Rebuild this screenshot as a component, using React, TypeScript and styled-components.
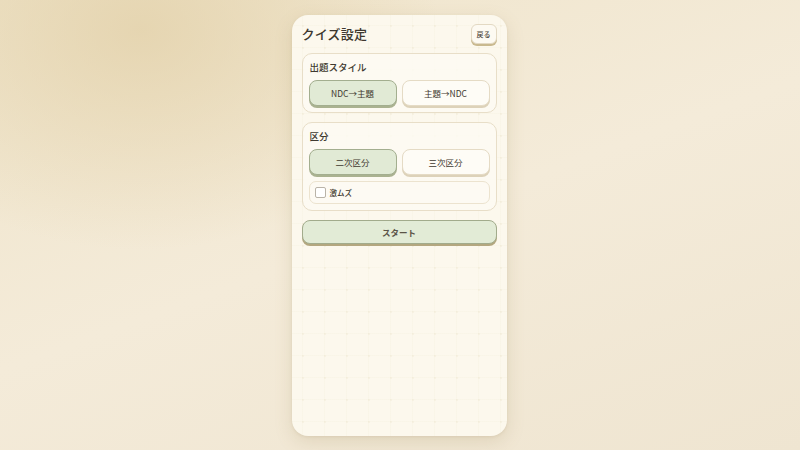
import React, { useState } from 'react';
import styled, { createGlobalStyle } from 'styled-components';

const GlobalStyle = createGlobalStyle`
  html, body {
    margin: 0;
    padding: 0;
    height: 100%;
  }
  body {
    font-family: "Noto Sans CJK JP", "Noto Sans", sans-serif;
    color: #3b352c;
  }
  #root {
    height: 100%;
  }
`;

const Page = styled.div`
  width: 100%;
  height: 100vh;
  box-sizing: border-box;
  padding: 15px 2px 14px 0;
  display: flex;
  justify-content: center;
  background:
    radial-gradient(ellipse 300px 220px at 140px 30px, rgba(226, 208, 168, 0.75), rgba(226, 208, 168, 0) 100%),
    linear-gradient(160deg, #efe4ca 0%, #f4ebd9 50%, #efe5d1 100%);
`;

const Card = styled.div`
  width: 215px;
  box-sizing: border-box;
  border-radius: 16px;
  padding: 7px 10px;
  display: flex;
  flex-direction: column;
  gap: 9px;
  background-color: #fcf8ed;
  background-image:
    radial-gradient(circle, rgba(220, 205, 170, 0.14) 0.8px, transparent 1.2px),
    linear-gradient(rgba(225, 212, 180, 0.08) 1px, transparent 1px),
    linear-gradient(90deg, rgba(225, 212, 180, 0.08) 1px, transparent 1px);
  background-size: 22px 22px;
  background-position: 0 0, 10px 10px, 10px 10px;
  box-shadow: 0 6px 18px rgba(150, 125, 80, 0.18), 0 1px 3px rgba(150, 125, 80, 0.12);
`;

const Header = styled.div`
  display: flex;
  align-items: center;
  justify-content: space-between;
  height: 22px;
`;

const Title = styled.h1`
  margin: 0;
  font-size: 13px;
  font-weight: 500;
  letter-spacing: 0.2px;
  color: #3d372e;
`;

const BackButton = styled.button`
  width: 26px;
  height: 20px;
  padding: 0;
  font-family: inherit;
  font-size: 7px;
  font-weight: 500;
  color: #4a4338;
  background: #fdfaf2;
  border: 1px solid #e3d9c3;
  border-radius: 6px;
  box-shadow: 0 2px 0 #c9b98f;
  cursor: pointer;
  margin-top: 2px;
`;

const Section = styled.div`
  border: 1px solid #e8dec8;
  border-radius: 10px;
  background: rgba(253, 250, 242, 0.85);
  padding: 7px 6px 6px;
  display: flex;
  flex-direction: column;
  gap: 6px;
`;

const SectionLabel = styled.div`
  font-size: 9.5px;
  font-weight: 500;
  color: #403a30;
  padding-left: 1px;
  line-height: 13px;
`;

const ButtonRow = styled.div`
  display: grid;
  grid-template-columns: 1fr 1fr;
  gap: 5px;
`;

const ChoiceButton = styled.button<{ $active: boolean }>`
  height: 26px;
  padding: 0;
  font-family: inherit;
  font-size: 8.5px;
  font-weight: 400;
  color: #3e382e;
  border-radius: 8px;
  cursor: pointer;
  background: ${(p) => (p.$active ? '#e1ead5' : '#fefcf6')};
  border: 1px solid ${(p) => (p.$active ? '#a3ae8f' : '#e5dbc5')};
  box-shadow: 0 2px 0 ${(p) => (p.$active ? '#aab290' : '#ddd2b9')};
`;

const CheckRow = styled.label`
  display: flex;
  align-items: center;
  gap: 4px;
  height: 21px;
  padding: 0 5px;
  border: 1px solid #ece3cf;
  border-radius: 7px;
  background: #fdfaf3;
  font-size: 7.5px;
  font-weight: 500;
  color: #3e382e;
  cursor: pointer;
`;

const Box = styled.span`
  width: 9px;
  height: 9px;
  border: 1px solid #b9b3a8;
  border-radius: 2px;
  background: #ffffff;
`;

const StartButton = styled.button`
  height: 24px;
  font-family: inherit;
  font-size: 8.5px;
  font-weight: 700;
  color: #5a5346;
  background: #e2ebd6;
  border: 1px solid #a2ab8c;
  border-radius: 8px;
  box-shadow: 0 2px 0 #b3a77f;
  cursor: pointer;
`;

const App = () => {
  const [style, setStyle] = useState<'ndc' | 'topic'>('ndc');
  const [level, setLevel] = useState<2 | 3>(2);
  const [hard, setHard] = useState(false);

  return (
    <>
      <GlobalStyle />
      <Page>
        <Card>
          <Header>
            <Title>クイズ設定</Title>
            <BackButton>戻る</BackButton>
          </Header>

          <Section>
            <SectionLabel>出題スタイル</SectionLabel>
            <ButtonRow>
              <ChoiceButton $active={style === 'ndc'} onClick={() => setStyle('ndc')}>
                NDC→主題
              </ChoiceButton>
              <ChoiceButton $active={style === 'topic'} onClick={() => setStyle('topic')}>
                主題→NDC
              </ChoiceButton>
            </ButtonRow>
          </Section>

          <Section>
            <SectionLabel>区分</SectionLabel>
            <ButtonRow>
              <ChoiceButton $active={level === 2} onClick={() => setLevel(2)}>
                二次区分
              </ChoiceButton>
              <ChoiceButton $active={level === 3} onClick={() => setLevel(3)}>
                三次区分
              </ChoiceButton>
            </ButtonRow>
            <CheckRow onClick={() => setHard(!hard)}>
              <Box />
              激ムズ
            </CheckRow>
          </Section>

          <StartButton>スタート</StartButton>
        </Card>
      </Page>
    </>
  );
};

export default App;
